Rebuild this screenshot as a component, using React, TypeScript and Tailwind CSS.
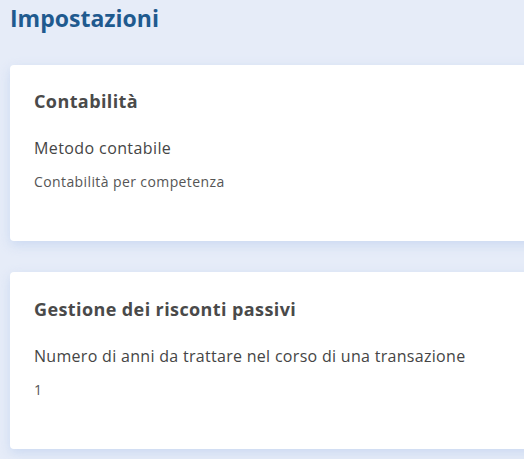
export default function App() {
  return (
    <div
      className="min-h-screen w-[524px] overflow-hidden bg-[#e6ecf8] pl-[10px] pt-[2px]"
      style={{ fontFamily: "'Open Sans', Lato, sans-serif" }}
    >
      <h1 className="text-[23px] leading-[32px] font-bold text-[#1f5a8f]">
        Impostazioni
      </h1>

      {/* Contabilità */}
      <section className="mt-[31px] w-[560px] rounded bg-white px-6 pt-[22px] pb-[49px] shadow-[0_4px_12px_rgba(170,195,235,0.45)]">
        <h2 className="text-[18px] leading-[28px] font-bold tracking-[0.4px] text-[#4a4a4a]">
          Contabilità
        </h2>
        <div className="mt-[21px] text-[16px] leading-[24px] font-medium tracking-[0.4px] text-[#454545]">
          Metodo contabile
        </div>
        <div className="mt-[12px] text-[14px] leading-[20px] tracking-[0.4px] text-[#555]">
          Contabilità per competenza
        </div>
      </section>

      {/* Risconti */}
      <section className="mt-[31px] w-[560px] rounded bg-white px-6 pt-[23px] pb-[49px] shadow-[0_4px_12px_rgba(170,195,235,0.45)]">
        <h2 className="text-[18px] leading-[28px] font-bold tracking-[0.4px] text-[#4a4a4a]">
          Gestione dei risconti passivi
        </h2>
        <div className="mt-[21px] text-[16px] leading-[24px] font-medium tracking-[0.3px] text-[#454545]">
          Numero di anni da trattare nel corso di una transazione
        </div>
        <div className="mt-[12px] text-[14px] leading-[20px] tracking-[0.4px] text-[#555]">
          1
        </div>
      </section>
    </div>
  );
}
